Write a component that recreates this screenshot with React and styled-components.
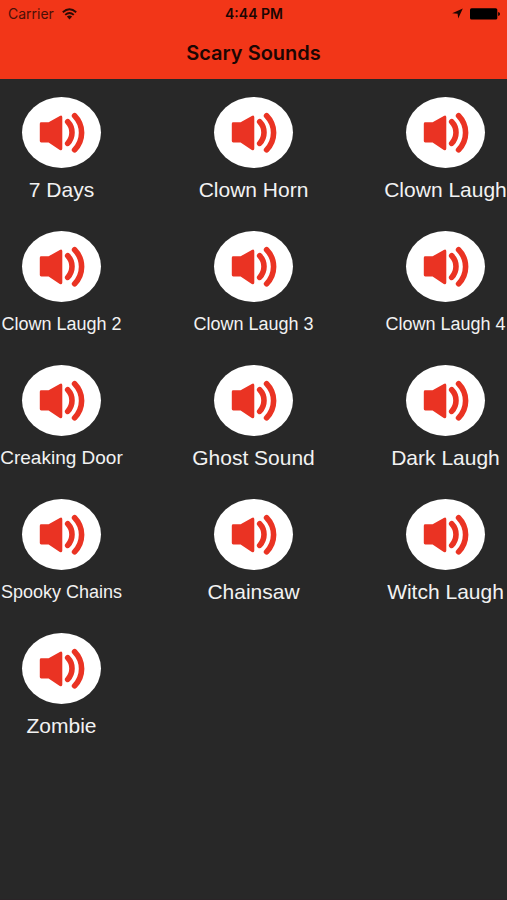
import React, { useState } from 'react';
import styled, { createGlobalStyle } from 'styled-components';

const sounds = [
  { name: '7 Days', size: 21 },
  { name: 'Clown Horn', size: 21 },
  { name: 'Clown Laugh', size: 21 },
  { name: 'Clown Laugh 2', size: 18 },
  { name: 'Clown Laugh 3', size: 18 },
  { name: 'Clown Laugh 4', size: 18 },
  { name: 'Creaking Door', size: 19 },
  { name: 'Ghost Sound', size: 21 },
  { name: 'Dark Laugh', size: 21 },
  { name: 'Spooky Chains', size: 18 },
  { name: 'Chainsaw', size: 21 },
  { name: 'Witch Laugh', size: 21 },
  { name: 'Zombie', size: 21 },
];

const SpeakerIcon = () => (
  <svg width="79" height="71" viewBox="0 0 79 71" fill="none" aria-hidden="true">
    <path
      d="M19.2 25.3H26.6L37.8 18.9Q40.3 17.9 40.3 20.2V51.6Q40.3 54 37.8 52.9L26.6 45.4H19.2Q17.8 45.4 17.8 44V26.7Q17.8 25.3 19.2 25.3Z"
      fill="#ea3323"
    />
    <path
      d="M45.7 24.8Q50 29.2 50 35.6T45.7 46.4M52.6 18.8Q59.6 26 59.6 35.7T52.6 52.8"
      stroke="#ea3323"
      strokeWidth="5.6"
      strokeLinecap="round"
    />
  </svg>
);

const WifiIcon = () => (
  <svg width="15" height="12" viewBox="0 0 15 12" fill="none" aria-hidden="true">
    <path d="M0.8 4.2Q7.5 -1.6 14.2 4.2M3.2 6.9Q7.5 3.2 11.8 6.9" stroke="#2b0a05" strokeWidth="1.9" />
    <path d="M4.9 8.6Q7.5 6.5 10.1 8.6L7.5 11.4Z" fill="#2b0a05" />
  </svg>
);

const LocationIcon = () => (
  <svg width="11" height="11" viewBox="0 0 11 11" aria-hidden="true">
    <path d="M10.8 0.4L6.2 10.6L5.6 5.8L0.2 5.3Z" fill="#1c0603" />
  </svg>
);

const BatteryIcon = () => (
  <svg width="30" height="12" viewBox="0 0 30 12" aria-hidden="true">
    <rect x="0" y="0.2" width="27.3" height="11.4" rx="1.6" fill="#000" />
    <path d="M28.2 4Q30 4.3 30 6T28.2 8Z" fill="#000" />
  </svg>
);

const App = () => {
  const [playing, setPlaying] = useState(null);

  return (
    <PageWrapper>
      <GlobalStyle />
      <Header>
        <StatusBar>
          <Carrier>
            Carrier
            <WifiIcon />
          </Carrier>
          <Clock>4:44 PM</Clock>
          <StatusIcons>
            <LocationIcon />
            <BatteryIcon />
          </StatusIcons>
        </StatusBar>
        <Title>Scary Sounds</Title>
      </Header>
      <SoundGrid>
        {sounds.map((sound) => (
          <SoundButton
            key={sound.name}
            type="button"
            aria-pressed={playing === sound.name}
            onClick={() => setPlaying(sound.name)}
          >
            <SoundDisc>
              <SpeakerIcon />
            </SoundDisc>
            <SoundLabel $size={sound.size}>{sound.name}</SoundLabel>
          </SoundButton>
        ))}
      </SoundGrid>
    </PageWrapper>
  );
};

const GlobalStyle = createGlobalStyle`
  * {
    box-sizing: border-box;
  }

  body {
    margin: 0;
    background-color: #282828;
  }
`;

const PageWrapper = styled.div`
  min-height: 100vh;
  background-color: #282828;
  border-bottom: 1px solid #2a2427;
  font-family: Inter, sans-serif;
  overflow-x: hidden;
`;

const Header = styled.header`
  background-color: #f23618;
  color: #1c0603;
  padding-bottom: 12px;
`;

const StatusBar = styled.div`
  display: grid;
  grid-template-columns: 1fr auto 1fr;
  align-items: center;
  height: 27px;
  padding: 0 7px 0 8px;
  font-size: 14px;
`;

const Carrier = styled.div`
  display: flex;
  align-items: center;
  gap: 8px;
  color: #4a1007;
`;

const Clock = styled.time`
  font-weight: 600;
`;

const StatusIcons = styled.div`
  display: flex;
  align-items: center;
  justify-content: flex-end;
  gap: 7px;
`;

const Title = styled.h1`
  margin: 0;
  padding-top: 12px;
  font-size: 20px;
  font-weight: 600;
  line-height: 28px;
  text-align: center;
`;

const SoundGrid = styled.main`
  display: grid;
  grid-template-columns: repeat(3, 123px);
  justify-content: space-between;
  row-gap: 27px;
  padding: 18px 0;
`;

const SoundButton = styled.button`
  display: flex;
  flex-direction: column;
  align-items: center;
  gap: 8px;
  padding: 0;
  border: none;
  background: none;
  cursor: pointer;
`;

const SoundDisc = styled.span`
  display: flex;
  border-radius: 50%;
  background-color: #fff;
`;

const SoundLabel = styled.span`
  color: #f2f2f2;
  font-family: 'Liberation Sans', Arial, sans-serif;
  font-size: ${(props) => props.$size}px;
  line-height: 28px;
  white-space: nowrap;
`;

export default App;
